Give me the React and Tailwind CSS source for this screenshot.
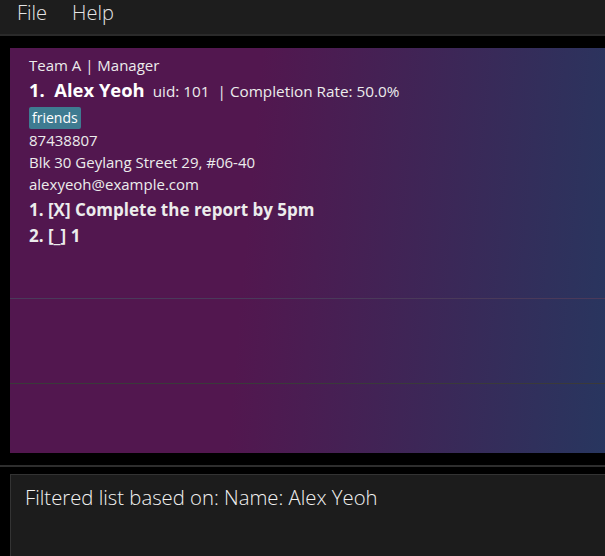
export default function App() {
  return (
    <div className="w-[605px] h-[556px] bg-black flex flex-col overflow-hidden font-['Open_Sans',sans-serif]">
      <div className="h-[36px] shrink-0 bg-[#1d1d1d] flex items-start gap-[25px] pl-[17px] text-[20px] leading-[26px] font-light text-[#e6e6e6] border-b-2 border-[#2a2a2a]">
        <span>File</span>
        <span>Help</span>
      </div>
      <div className="pt-[12px] pl-[10px] shrink-0">
        <div className="h-[405px] bg-[linear-gradient(95deg,#52174f_40%,#28365f_100%)] flex flex-col">
          <div className="h-[251px] border-b border-[#4a3a5a] pl-[19px] pt-[7px] text-white">
            <div className="text-[15px] leading-[21px] text-[#ececec]">Team A | Manager</div>
            <div className="flex items-baseline mt-[1px] leading-[26px]">
              <span className="text-[18.4px] font-bold">1.&nbsp;&nbsp;Alex Yeoh</span>
              <span className="text-[15.3px] ml-[8px] text-[#ececec]">uid: 101&nbsp;&nbsp;| Completion Rate: 50.0%</span>
            </div>
            <div className="mt-[3px] flex">
              <span className="bg-[#3e7b91] rounded-[2px] px-[3px] text-[14px] leading-[22px] text-white">friends</span>
            </div>
            <div className="text-[15px] leading-[22px] text-[#ececec]">87438807</div>
            <div className="text-[15px] leading-[22px] text-[#ececec]">Blk 30 Geylang Street 29, #06-40</div>
            <div className="text-[15px] leading-[22px] text-[#ececec]">alexyeoh@example.com</div>
            <div className="text-[17px] font-bold leading-[26px] mt-[2px] text-[#ececec]">1. [X] Complete the report by 5pm</div>
            <div className="text-[17px] font-bold leading-[26px] text-[#ececec]">2. [_] 1</div>
          </div>
          <div className="h-[85px] border-b border-[#3a3a3a]"></div>
          <div className="flex-1"></div>
        </div>
      </div>
      <div className="mt-[12px] h-[2px] bg-[#2e2e2e] shrink-0"></div>
      <div className="pt-[7px] pl-[10px] flex-1 flex">
        <div className="flex-1 bg-[#1c1c1c] border-l border-t border-[#333333] pl-[14px] pt-[8px] text-[20.3px] font-light text-[#f2f2f2] leading-[28px]">
          Filtered list based on: Name: Alex Yeoh
        </div>
      </div>
    </div>
  );
}
